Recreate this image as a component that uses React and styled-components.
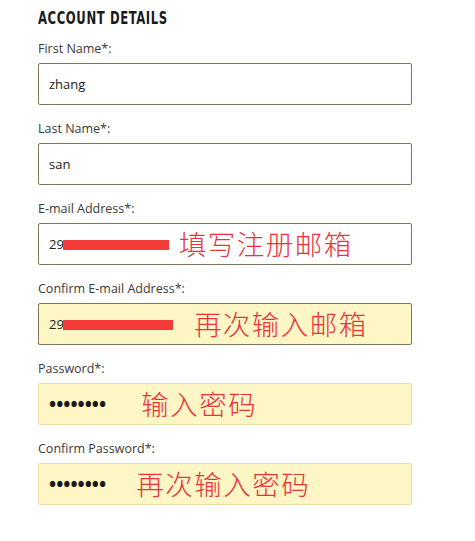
import styled, { createGlobalStyle } from 'styled-components';

const GlobalStyle = createGlobalStyle`
  body {
    margin: 0;
    background: #fff;
    font-family: 'Open Sans', 'Liberation Sans', sans-serif;
  }
`;

const Form = styled.div`
  width: 374px;
  padding: 8px 0 0 38px;
`;

const Title = styled.h2`
  margin: 0 0 13px;
  font-family: 'DejaVu Sans Condensed', 'DejaVu Sans', sans-serif;
  font-stretch: condensed;
  font-weight: 700;
  font-size: 18px;
  line-height: 20px;
  letter-spacing: 0.8px;
  color: #1b1b1b;
  white-space: nowrap;
  transform: scaleX(0.72);
  transform-origin: left center;
`;

const Field = styled.div`
  margin-bottom: 16px;
`;

const Label = styled.div`
  font-size: 12.5px;
  line-height: 16px;
  color: #3a3a3a;
  margin-bottom: 6px;
`;

const Box = styled.div`
  position: relative;
  box-sizing: border-box;
  height: 42px;
  display: flex;
  align-items: center;
  padding: 0 10px;
  border-radius: 2px;
  border: 1px solid ${({ $tone }) => ($tone === 'soft' ? '#ebdca8' : '#7b7757')};
  background: ${({ $tone }) => ($tone === 'plain' ? '#ffffff' : '#fff6c5')};
`;

const Value = styled.span`
  position: relative;
  font-size: 13px;
  color: #222;
`;

const Dots = styled.span`
  font-size: 19px;
  font-weight: 700;
  letter-spacing: 0;
  color: #1a1a1a;
`;

const Redact = styled.span`
  position: absolute;
  left: 14px;
  top: 5px;
  width: ${({ $w }) => $w}px;
  height: 10px;
  background: #f53a3a;
`;

const Note = styled.span`
  margin-left: ${({ $offset }) => $offset}px;
  font-family: 'Noto Sans CJK SC', sans-serif;
  font-weight: 300;
  font-size: 27.5px;
  line-height: 1;
  letter-spacing: 1.5px;
  color: #e8333d;
`;

const fields = [
  { label: 'First Name*:', value: 'zhang', tone: 'plain' },
  { label: 'Last Name*:', value: 'san', tone: 'plain' },
  { label: 'E-mail Address*:', value: '29', redact: 106, tone: 'plain', note: '填写注册邮箱', offset: 115 },
  { label: 'Confirm E-mail Address*:', value: '29', redact: 110, tone: 'yellow', note: '再次输入邮箱', offset: 130 },
  { label: 'Password*:', dots: true, tone: 'soft', note: '输入密码', offset: 35 },
  { label: 'Confirm Password*:', dots: true, tone: 'soft', note: '再次输入密码', offset: 30 },
];

export default function App() {
  return (
    <>
      <GlobalStyle />
      <Form>
        <Title>ACCOUNT DETAILS</Title>
        {fields.map((f) => (
          <Field key={f.label}>
            <Label>{f.label}</Label>
            <Box $tone={f.tone}>
              {f.dots ? (
                <Dots>••••••••</Dots>
              ) : (
                <Value>
                  {f.value}
                  {f.redact && <Redact $w={f.redact} />}
                </Value>
              )}
              {f.note && <Note $offset={f.offset}>{f.note}</Note>}
            </Box>
          </Field>
        ))}
      </Form>
    </>
  );
}
